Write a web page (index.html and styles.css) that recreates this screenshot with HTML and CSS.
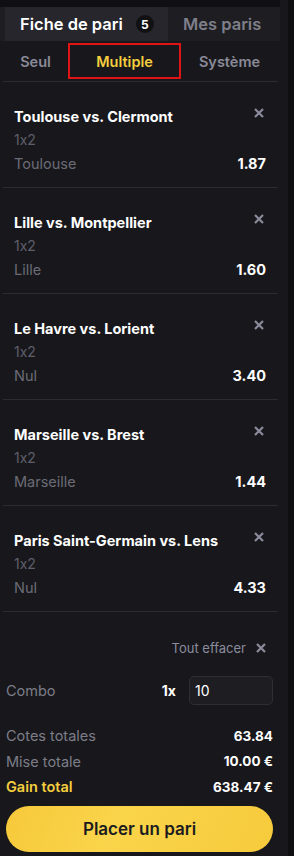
FILE: index.html
```html
<!DOCTYPE html>
<html lang="fr">
<head>
<meta charset="utf-8">
<link rel="stylesheet" href="styles.css">
</head>
<body>
<div class="page">
  <main class="slip">
    <div class="top-tabs">
      <div class="top-tab active">Fiche de pari <span class="badge">5</span></div>
      <div class="top-tab">Mes paris</div>
    </div>
    <div class="sub-tabs">
      <div class="sub-tab">Seul</div>
      <div class="sub-tab selected">Multiple</div>
      <div class="sub-tab">Système</div>
    </div>

    <div class="bet">
      <div class="bet-head"><span class="match">Toulouse vs. Clermont</span><svg class="x" viewBox="0 0 10 10"><path d="M1 1L9 9M9 1L1 9"/></svg></div>
      <div class="market">1x2</div>
      <div class="bet-foot"><span class="pick">Toulouse</span><span class="odd">1.87</span></div>
    </div>
    <div class="bet">
      <div class="bet-head"><span class="match">Lille vs. Montpellier</span><svg class="x" viewBox="0 0 10 10"><path d="M1 1L9 9M9 1L1 9"/></svg></div>
      <div class="market">1x2</div>
      <div class="bet-foot"><span class="pick">Lille</span><span class="odd">1.60</span></div>
    </div>
    <div class="bet">
      <div class="bet-head"><span class="match">Le Havre vs. Lorient</span><svg class="x" viewBox="0 0 10 10"><path d="M1 1L9 9M9 1L1 9"/></svg></div>
      <div class="market">1x2</div>
      <div class="bet-foot"><span class="pick">Nul</span><span class="odd">3.40</span></div>
    </div>
    <div class="bet">
      <div class="bet-head"><span class="match">Marseille vs. Brest</span><svg class="x" viewBox="0 0 10 10"><path d="M1 1L9 9M9 1L1 9"/></svg></div>
      <div class="market">1x2</div>
      <div class="bet-foot"><span class="pick">Marseille</span><span class="odd">1.44</span></div>
    </div>
    <div class="bet">
      <div class="bet-head"><span class="match">Paris Saint-Germain vs. Lens</span><svg class="x" viewBox="0 0 10 10"><path d="M1 1L9 9M9 1L1 9"/></svg></div>
      <div class="market">1x2</div>
      <div class="bet-foot"><span class="pick">Nul</span><span class="odd">4.33</span></div>
    </div>

    <div class="clear-row"><span class="clear">Tout effacer</span><svg class="x" viewBox="0 0 10 10"><path d="M1 1L9 9M9 1L1 9"/></svg></div>

    <div class="combo-row">
      <span class="combo-label">Combo</span>
      <span class="combo-mult">1x</span>
      <div class="stake">10</div>
    </div>

    <div class="totals">
      <div class="total-row"><span class="t-label">Cotes totales</span><span class="t-val">63.84</span></div>
      <div class="total-row"><span class="t-label">Mise totale</span><span class="t-val">10.00 €</span></div>
      <div class="total-row gain"><span class="t-label">Gain total</span><span class="t-val">638.47 €</span></div>
    </div>

    <button class="place">Placer un pari</button>
  </main>
  <div class="scroll-strip"></div>
</div>
</body>
</html>
```

FILE: styles.css
```css
* { box-sizing: border-box; }
html, body { margin: 0; padding: 0; }
body {
  background: #18181c;
  font-family: Inter, "Noto Sans", sans-serif;
  font-feature-settings: "calt" 0;
  color: #ffffff;
  width: 294px;
  height: 856px;
  overflow: hidden;
}
.page { display: flex; height: 856px; }
.slip { width: 288px; background: #18181c; display: flex; flex-direction: column; }
.scroll-strip { width: 6px; background: #0f0f12; }

.top-tabs {
  display: flex;
  background: #1d1d22;
  border-top: 7px solid #101013;
  height: 41px;
  padding-left: 5px;
  margin-right: 8px;
}
.top-tab {
  display: flex;
  align-items: center;
  font-size: 16.5px;
  font-weight: 600;
  color: #7f7f8a;
  padding: 0 0 0 15px;
}
.top-tab.active {
  background: #26262c;
  color: #ffffff;
  width: 163px;
  padding-left: 15px;
}
.badge {
  display: inline-flex;
  align-items: center;
  justify-content: center;
  width: 18px;
  height: 18px;
  border-radius: 50%;
  background: #111114;
  color: #fff;
  font-size: 12px;
  font-weight: 700;
  margin-left: 13px;
}

.sub-tabs {
  display: flex;
  align-items: center;
  height: 41px;
  margin: 0 10px 0 3px;
  border-bottom: 1px solid #2c2c33;
  font-size: 14.5px;
  font-weight: 600;
  color: #8a8a98;
}
.sub-tab { display: flex; align-items: center; justify-content: center; height: 36px; }
.sub-tab:nth-child(1) { width: 65px; }
.sub-tab.selected {
  width: 113px;
  color: #f4ce3e;
  border: 2px solid #e01414;
}
.sub-tab:nth-child(3) { width: 97px; }

.bet {
  margin: 0 10px 0 3px;
  padding: 23px 12px 0 11px;
  height: 106px;
  border-bottom: 1px solid #2c2c33;
  display: flex;
  flex-direction: column;
}
.bet-head { display: flex; justify-content: space-between; align-items: center; height: 22px; }
.match { font-size: 14.5px; font-weight: 700; color: #fff; }
.x { width: 10px; height: 10px; stroke: #8b8b9c; stroke-width: 2.2; fill: none; flex: none; margin-right: 2px; margin-top: -6px; }
.market { font-size: 14px; color: #5e5e69; height: 25px; line-height: 25px; }
.bet-foot { display: flex; justify-content: space-between; align-items: center; height: 22px; }
.pick { font-size: 14.5px; color: #6b6b76; }
.odd { font-size: 14.5px; font-weight: 700; color: #fff; }

.clear-row {
  display: flex; justify-content: flex-end; align-items: center; gap: 10px;
  margin: 25px 20px 0 0;
  height: 22px;
}
.clear-row .x { margin-top: 0; }
.clear { font-size: 13px; color: #8b8b9c; }

.combo-row {
  display: flex; align-items: center;
  margin: 17px 15px 0 6px;
  height: 29px;
}
.combo-label { font-size: 14.5px; color: #7d7d88; flex: 1; }
.combo-mult { font-size: 14px; font-weight: 700; color: #fff; margin-right: 13px; }
.stake {
  width: 84px; height: 29px;
  border: 1px solid #2e2e35; border-radius: 5px;
  background: #1d1d22;
  font-size: 14px; color: #fff;
  padding-left: 5px; display: flex; align-items: center;
}

.totals { margin: 18px 15px 0 6px; display: flex; flex-direction: column; }
.total-row { display: flex; justify-content: space-between; align-items: center; height: 25.5px; }
.t-label { font-size: 14.5px; color: #7d7d88; }
.t-val { font-size: 13.5px; font-weight: 700; color: #fff; }
.gain .t-label { color: #f4ce3e; font-weight: 600; }

.place {
  margin: 6px 15px 0 6px;
  height: 46px;
  border: none;
  border-radius: 23px;
  background: linear-gradient(115deg, #f6c93a 0%, #fad44a 40%, #f6cb3c 100%);
  font-family: inherit;
  font-size: 17px;
  font-weight: 600;
  color: #1b1b1f;
}
```
